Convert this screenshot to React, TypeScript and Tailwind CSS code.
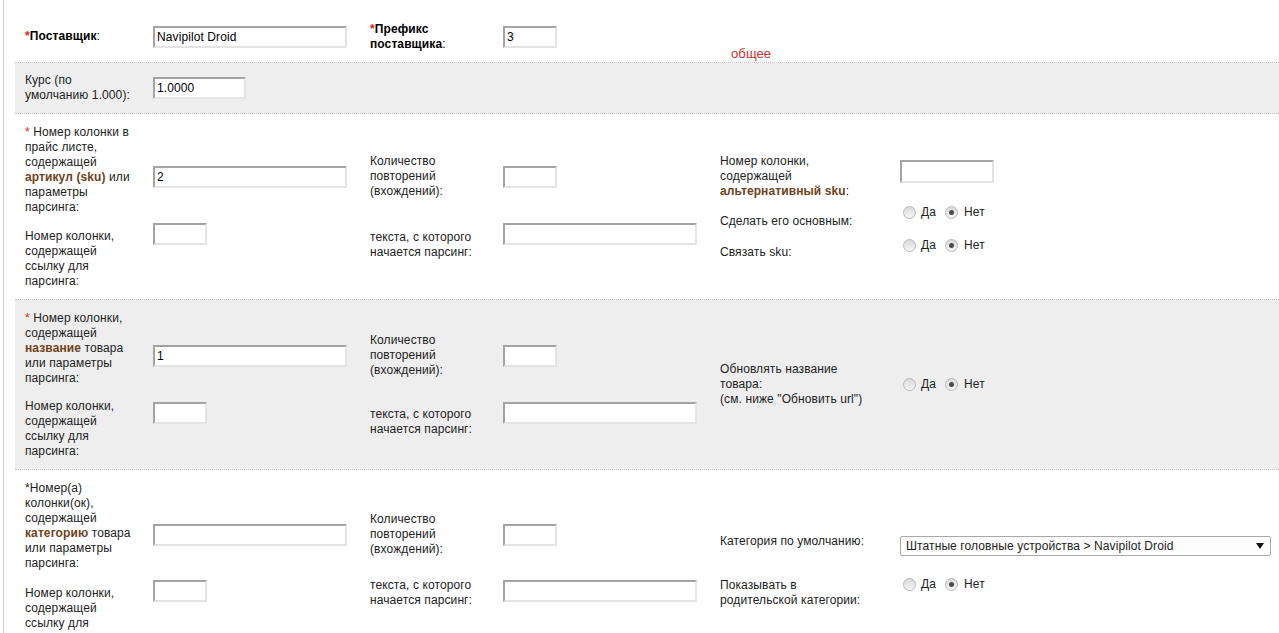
import React from "react";

const Star = () => <span className="text-[#d22]">*</span>;

function Hl({ children }: { children: React.ReactNode }) {
  return <b className="text-[#6f4220]">{children}</b>;
}

function Field({ className = "", value = "" }: { className?: string; value?: string }) {
  return (
    <input
      readOnly
      value={value}
      className={
        "h-[22px] shrink-0 border-2 border-t-[#a3a3a3] border-l-[#a3a3a3] border-r-[#e4e4e4] border-b-[#e4e4e4] bg-white px-[2px] text-[12px] text-black outline-none " +
        className
      }
    />
  );
}

function Radio({ checked = false, className = "" }: { checked?: boolean; className?: string }) {
  return (
    <span
      className={
        "flex h-[13px] w-[13px] shrink-0 items-center justify-center rounded-full border border-[#b8b8b8] bg-linear-to-b from-[#d9d9d9] to-[#f6f6f6] " +
        className
      }
    >
      {checked && <span className="h-[5px] w-[5px] rounded-full bg-[#4a4a4a]" />}
    </span>
  );
}

function YesNo({ className = "" }: { className?: string }) {
  return (
    <div className={"flex h-[13px] items-center text-[12px] text-[#222] " + className}>
      <Radio className="ml-[3px]" />
      <span className="ml-[5px]">Да</span>
      <Radio checked className="ml-[9px]" />
      <span className="ml-[6px]">Нет</span>
    </div>
  );
}

const row = "flex shrink-0 border-b border-dotted border-[#c2c2c2] pl-[10px]";
const lbl1 = "w-[128px] shrink-0 pr-[19px]";
const lbl2 = "w-[133px] shrink-0 pr-[16px]";
const lbl3 = "w-[180px] shrink-0 pr-[28px]";

export default function App() {
  return (
    <div className="h-[633px] overflow-hidden bg-white font-['Liberation_Sans',Arial,sans-serif] text-[12px] leading-[15px] tracking-[0.1px] text-[#222]">
      <div className="ml-[3px] flex min-h-full flex-col border-l border-[#d0d0d0] pl-[11px]">
        {/* поставщик */}
        <div className={row + " h-[63px] items-center pt-[11px]"}>
          <div className="flex w-[345px] items-center">
            <div className={lbl1 + " font-bold text-black"}>
              <Star />
              Поставщик<span className="font-normal">:</span>
            </div>
            <Field className="w-[194px]" value="Navipilot Droid" />
          </div>
          <div className="flex w-[350px] items-center">
            <div className={lbl2 + " font-bold text-black"}>
              <Star />
              Префикс поставщика<span className="font-normal">:</span>
            </div>
            <Field className="w-[54px]" value="3" />
          </div>
          <div className="flex self-stretch items-end pb-[1px] pl-[11px] text-[13px] text-[#c8302c]">общее</div>
        </div>

        {/* курс */}
        <div className={row + " h-[51px] items-center bg-[#eeeeee]"}>
          <div className={lbl1}>Курс (по умолчанию 1.000):</div>
          <Field className="w-[93px]" value="1.0000" />
        </div>

        {/* артикул */}
        <div className={row + " h-[186px] items-start"}>
          <div className="flex w-[345px] flex-col">
            <div className="flex items-start pt-[11px]">
              <div className={lbl1}>
                <Star /> Номер колонки в прайс листе, содержащей <Hl>артикул (sku)</Hl> или параметры парсинга:
              </div>
              <Field className="mt-[41px] w-[194px]" value="2" />
            </div>
            <div className="mt-[8px] flex items-start">
              <div className={lbl1 + " mt-[6px]"}>Номер колонки, содержащей ссылку для парсинга:</div>
              <Field className="w-[54px]" />
            </div>
          </div>
          <div className="flex w-[350px] flex-col">
            <div className="flex items-start pt-[40px]">
              <div className={lbl2}>Количество повторений (вхождений):</div>
              <Field className="mt-[12px] w-[54px]" />
            </div>
            <div className="mt-[24px] flex items-start">
              <div className={lbl2 + " mt-[7px]"}>текста, с которого начается парсинг:</div>
              <Field className="w-[194px]" />
            </div>
          </div>
          <div className="flex flex-col">
            <div className="flex items-start pt-[40px]">
              <div className={lbl3}>
                Номер колонки, содержащей <Hl>альтернативный sku</Hl>:
              </div>
              <Field className="mt-[6px] h-[23px] w-[94px]" />
            </div>
            <div className="mt-[7px] flex items-start">
              <div className={lbl3 + " mt-[8px]"}>Сделать его основным:</div>
              <YesNo />
            </div>
            <div className="mt-[10px] flex items-start">
              <div className={lbl3 + " mt-[6px]"}>Связать sku:</div>
              <YesNo />
            </div>
          </div>
        </div>

        {/* название */}
        <div className={row + " h-[170px] items-start bg-[#eeeeee]"}>
          <div className="flex w-[345px] flex-col">
            <div className="flex items-start pt-[11px]">
              <div className={lbl1}>
                <Star /> Номер колонки, содержащей <Hl>название</Hl> товара или параметры парсинга:
              </div>
              <Field className="mt-[34px] w-[194px]" value="1" />
            </div>
            <div className="mt-[13px] flex items-start">
              <div className={lbl1}>Номер колонки, содержащей ссылку для парсинга:</div>
              <Field className="mt-[3px] w-[54px]" />
            </div>
          </div>
          <div className="flex w-[350px] flex-col">
            <div className="flex items-start pt-[33px]">
              <div className={lbl2}>Количество повторений (вхождений):</div>
              <Field className="mt-[12px] w-[54px]" />
            </div>
            <div className="mt-[24px] flex items-start">
              <div className={lbl2 + " mt-[5px]"}>текста, с которого начается парсинг:</div>
              <Field className="w-[194px]" />
            </div>
          </div>
          <div className="flex items-start pt-[62px]">
            <div className={lbl3}>
              Обновлять название товара:
              <br />
              (см. ниже "Обновить url")
            </div>
            <YesNo className="mt-[16px]" />
          </div>
        </div>

        {/* категория */}
        <div className={row + " h-[200px] items-start border-b-0"}>
          <div className="flex w-[345px] flex-col">
            <div className="flex items-start pt-[11px]">
              <div className={lbl1}>
                *Номер(а) колонки(ок), содержащей <Hl>категорию</Hl> товара или параметры парсинга:
              </div>
              <Field className="mt-[43px] w-[194px]" />
            </div>
            <div className="mt-[9px] flex items-start">
              <div className={lbl1 + " mt-[6px]"}>Номер колонки, содержащей ссылку для парсинга:</div>
              <Field className="w-[54px]" />
            </div>
          </div>
          <div className="flex w-[350px] flex-col">
            <div className="flex items-start pt-[42px]">
              <div className={lbl2}>Количество повторений (вхождений):</div>
              <Field className="mt-[12px] w-[54px]" />
            </div>
            <div className="mt-[21px] flex items-start">
              <div className={lbl2}>текста, с которого начается парсинг:</div>
              <Field className="mt-[2px] w-[194px]" />
            </div>
          </div>
          <div className="flex flex-col">
            <div className="flex items-start pt-[64px]">
              <div className={lbl3}>Категория по умолчанию:</div>
              <div className="mt-[2px] flex h-[20px] w-[371px] items-center justify-between rounded-[2px] border border-[#a9a9a9] bg-[#fdfdfd] pl-[5px] pr-[6px] text-[12px] text-[#222]">
                <span>Штатные головные устройства &gt; Navipilot Droid</span>
                <svg width="8" height="6" viewBox="0 0 8 6">
                  <path d="M0 0h8L4 6z" fill="#111" />
                </svg>
              </div>
            </div>
            <div className="mt-[22px] flex items-start">
              <div className={lbl3}>Показывать в родительской категории:</div>
              <YesNo />
            </div>
          </div>
        </div>
      </div>
    </div>
  );
}
